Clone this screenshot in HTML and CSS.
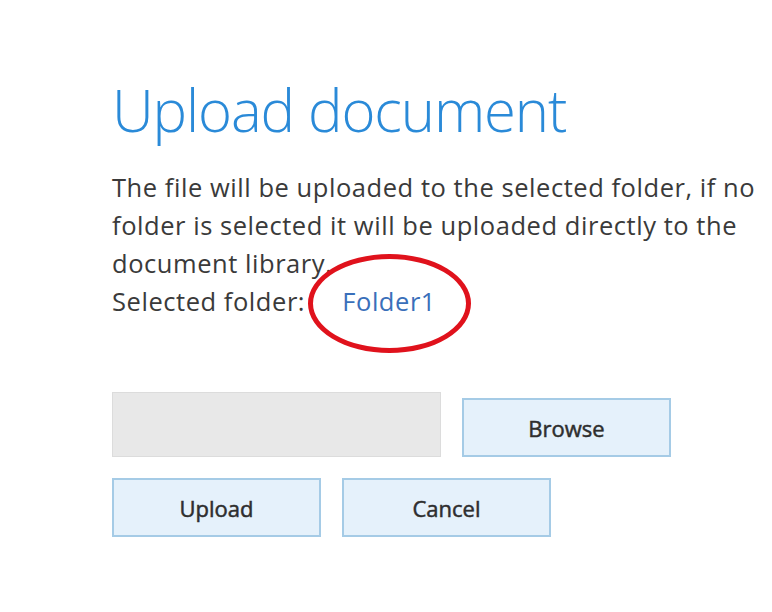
FILE: index.html
```html
<!DOCTYPE html>
<html>
<head>
<meta charset="utf-8">
<link rel="stylesheet" href="styles.css">
</head>
<body>
<div class="page">
  <h1 class="title">Upload document</h1>
  <p class="desc">The file will be uploaded to the selected folder, if no folder is selected it will be uploaded directly to the document library.</p>
  <p class="selected">Selected folder: <span class="folder">Folder1<span class="ring"></span></span></p>
  <div class="row first">
    <div class="file-box"></div>
    <button class="btn browse">Browse</button>
  </div>
  <div class="row second">
    <button class="btn">Upload</button>
    <button class="btn">Cancel</button>
  </div>
</div>
</body>
</html>
```
FILE: styles.css
```css
html, body {
  margin: 0;
  padding: 0;
  background: #ffffff;
}
.page {
  padding: 74px 0 0 112px;
  font-family: "Open Sans", "Segoe UI", sans-serif;
  color: #3a3a3a;
}
.title {
  margin: 0;
  font-weight: 300;
  font-size: 58px;
  line-height: 72px;
  color: #2a8ad8;
  letter-spacing: -1.1px;
}
.desc {
  margin: 22px 0 0 0;
  width: 672px;
  font-size: 25.5px;
  letter-spacing: 0.55px;
  line-height: 38px;
}
.selected {
  margin: 0;
  font-size: 25.5px;
  letter-spacing: 0.55px;
  line-height: 38px;
}
.folder {
  position: relative;
  margin-left: 30px;
  color: #3a6fba;
}
.ring {
  position: absolute;
  left: -34px;
  top: -30px;
  width: 153px;
  height: 89px;
  border: 5px solid #e0121c;
  border-radius: 50%;
}
.row {
  display: flex;
  gap: 21px;
}
.row.first {
  margin-top: 72px;
  align-items: flex-end;
}
.row.second {
  margin-top: 21px;
}
.file-box {
  width: 327px;
  height: 63px;
  background: #e8e8e8;
  border: 1px solid #dcdcdc;
}
.btn {
  width: 209px;
  height: 59px;
  background: #e5f1fb;
  border: 2px solid #a5cbe6;
  font-family: "Open Sans", "Segoe UI", sans-serif;
  font-size: 22px;
  font-weight: 400;
  -webkit-text-stroke: 0.5px #2e2e2e;
  color: #2e2e2e;
  padding: 0;
}
```
